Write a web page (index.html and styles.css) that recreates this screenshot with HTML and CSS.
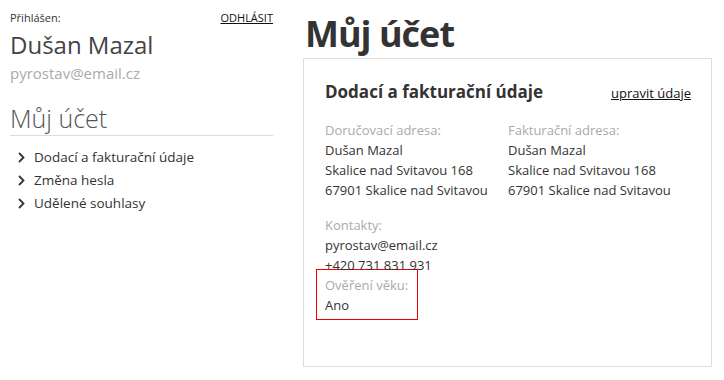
FILE: index.html
```html
<!DOCTYPE html>
<html lang="cs">
<head>
  <meta charset="UTF-8" />
  <title>Můj účet</title>
  <link rel="stylesheet" href="styles.css">
</head>
<body>
  <div class="page">
    <!-- Sidebar -->
    <aside class="sidebar">
      <div class="user-top">
        <span class="logged">Přihlášen:</span>
        <a href="#" class="logout">ODHLÁSIT</a>
      </div>
      <div class="user-name">Dušan Mazal</div>
      <div class="user-email">pyrostav@email.cz</div>

      <h2 class="side-title">Můj účet</h2>
      <ul class="side-menu">
        <li><svg class="chev" width="7" height="11" viewBox="0 0 7 11"><path d="M1 1l4.5 4.5L1 10" fill="none" stroke="#333" stroke-width="1.8"/></svg>Dodací a fakturační údaje</li>
        <li><svg class="chev" width="7" height="11" viewBox="0 0 7 11"><path d="M1 1l4.5 4.5L1 10" fill="none" stroke="#333" stroke-width="1.8"/></svg>Změna hesla</li>
        <li><svg class="chev" width="7" height="11" viewBox="0 0 7 11"><path d="M1 1l4.5 4.5L1 10" fill="none" stroke="#333" stroke-width="1.8"/></svg>Udělené souhlasy</li>
      </ul>
    </aside>

    <!-- Main -->
    <main class="main">
      <h1>Můj účet</h1>
      <div class="box">
        <div class="box-head">
          <h3>Dodací a fakturační údaje</h3>
          <a href="#" class="edit">upravit údaje</a>
        </div>

        <div class="addresses">
          <div class="col">
            <div class="label">Doručovací adresa:</div>
            <div>Dušan Mazal</div>
            <div>Skalice nad Svitavou 168</div>
            <div>67901 Skalice nad Svitavou</div>
          </div>
          <div class="col">
            <div class="label">Fakturační adresa:</div>
            <div>Dušan Mazal</div>
            <div>Skalice nad Svitavou 168</div>
            <div>67901 Skalice nad Svitavou</div>
          </div>
        </div>

        <div class="contacts">
          <div class="label">Kontakty:</div>
          <div>pyrostav@email.cz</div>
          <div>+420 731 831 931</div>
        </div>

        <div class="age">
          <div class="label">Ověření věku:</div>
          <div>Ano</div>
        </div>
      </div>
    </main>
  </div>
</body>
</html>
```

FILE: styles.css
```css
body {
  margin: 0;
  font-family: "Open Sans", "Noto Sans", sans-serif;
  color: #333;
  background: #fff;
}

.page {
  display: flex;
  padding: 10px 12px 0 10px;
  gap: 30px;
}

a {
  color: #111;
}

.sidebar {
  width: 263px;
  flex-shrink: 0;
}

.user-top {
  display: flex;
  justify-content: space-between;
  font-size: 11px;
  line-height: 16px;
}

.logout {
  font-size: 11px;
}

.user-name {
  font-size: 24px;
  line-height: 32px;
  margin-top: 3px;
  color: #444;
}

.user-email {
  font-size: 15px;
  color: #aaa;
  line-height: 22px;
  margin-top: 1px;
}

.side-title {
  font-size: 25px;
  font-weight: 300;
  color: #555;
  margin: 17px 0 0;
  line-height: 34px;
  border-bottom: 1px solid #ddd;
}

.side-menu {
  list-style: none;
  margin: 10px 0 0;
  padding: 0 0 0 8px;
  font-size: 13.5px;
  line-height: 23px;
}

.side-menu li {
  display: flex;
  align-items: center;
}

.chev {
  margin-right: 9px;
}

.main {
  flex: 1;
}

h1 {
  font-size: 36px;
  font-weight: 700;
  letter-spacing: -1px;
  margin: 0 0 0 2px;
  line-height: 48px;
  color: #333;
}

.box {
  box-sizing: border-box;
  border: 1px solid #ddd;
  height: 309px;
  padding: 16px 20px 0 21px;
  font-size: 13px;
  line-height: 20px;
}

.box-head {
  display: flex;
  justify-content: space-between;
  align-items: baseline;
  margin-bottom: 11px;
}

.box-head h3 {
  font-size: 17px;
  margin: 0;
  line-height: 34px;
}

.edit {
  font-size: 13px;
}

.label {
  color: #aaa;
}

.addresses {
  display: flex;
  gap: 18px;
}

.col {
  width: 165px;
}

.contacts {
  margin-top: 15px;
}

.age {
  border: 1px solid #e00;
  width: 84px;
  margin: -6px 0 0 -9px;
  padding: 5px 8px 4px 8px;
}
```
